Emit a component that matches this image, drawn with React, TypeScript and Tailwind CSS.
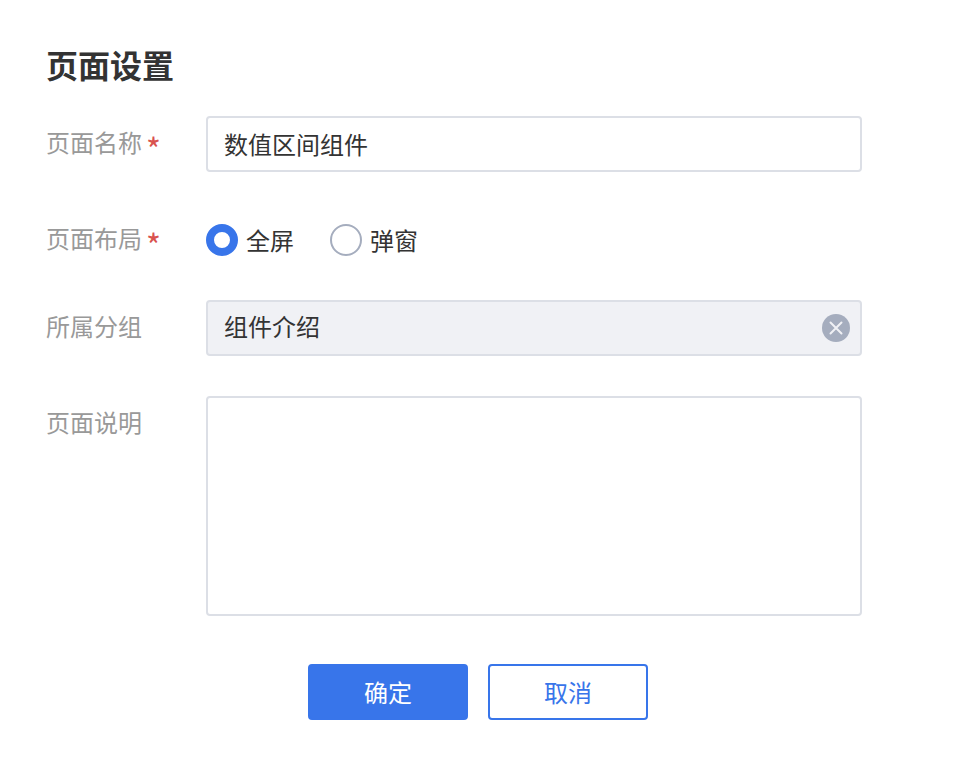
import { useState, type ReactNode } from "react";

interface FormRowProps {
    label: string;
    htmlFor?: string;
    required?: boolean;
    children: ReactNode;
}

function FormRow({ label, htmlFor, required, children }: FormRowProps) {
    return (
        <div className="flex items-start">
            <label htmlFor={htmlFor} className="flex h-14 w-40 shrink-0 items-center gap-1 pb-1 text-[#999999]">
                {label}
                {required && <span className="pt-3 text-[32px] leading-8 text-[#d9534f]">*</span>}
            </label>
            <div className="min-w-0 flex-1">{children}</div>
        </div>
    );
}

const layouts = [
    { value: "full", label: "全屏" },
    { value: "modal", label: "弹窗" },
];

export default function App() {
    const [name, setName] = useState("数值区间组件");
    const [layout, setLayout] = useState("full");
    const [group, setGroup] = useState("组件介绍");
    const [description, setDescription] = useState("");

    return (
        <form
            className="min-h-screen bg-white pt-10 pb-12 font-['Noto_Sans_CJK_SC',sans-serif] text-2xl text-[#333333]"
            onSubmit={(e) => e.preventDefault()}
        >
            <div className="pr-[94px] pl-[46px]">
                <h1 className="mb-7 text-[32px] leading-12 font-bold">页面设置</h1>

                <FormRow label="页面名称" htmlFor="page-name" required>
                    <input
                        id="page-name"
                        type="text"
                        value={name}
                        onChange={(e) => setName(e.target.value)}
                        className="block h-14 w-full rounded border-2 border-[#dcdfe6] px-4 pb-0.5 outline-none"
                    />
                </FormRow>

                <div className="mt-10">
                    <FormRow label="页面布局" required>
                        <div className="flex h-14 items-center gap-9" role="radiogroup" aria-label="页面布局">
                            {layouts.map((item) => (
                                <label key={item.value} className="flex items-center gap-2">
                                    <input
                                        type="radio"
                                        name="layout"
                                        value={item.value}
                                        checked={layout === item.value}
                                        onChange={() => setLayout(item.value)}
                                        className="size-8 appearance-none rounded-full border-2 border-[#a5adbe] bg-white checked:border-8 checked:border-[#3875ea]"
                                    />
                                    <span>{item.label}</span>
                                </label>
                            ))}
                        </div>
                    </FormRow>
                </div>

                <div className="mt-8">
                    <FormRow label="所属分组" htmlFor="page-group">
                        <div className="relative">
                            <input
                                id="page-group"
                                type="text"
                                readOnly
                                value={group}
                                className="block h-14 w-full rounded border-2 border-[#dcdfe6] bg-[#f0f1f5] pr-14 pb-1.5 pl-4 outline-none"
                            />
                            {group && (
                                <button
                                    type="button"
                                    aria-label="清除"
                                    onClick={() => setGroup("")}
                                    className="absolute top-3.5 right-3 size-7 rounded-full bg-[#a5adbe] text-[#f0f1f5]"
                                >
                                    <svg viewBox="0 0 28 28" fill="none" stroke="currentColor" strokeWidth="2" strokeLinecap="round">
                                        <path d="M8.5 8.5l11 11M19.5 8.5l-11 11" />
                                    </svg>
                                </button>
                            )}
                        </div>
                    </FormRow>
                </div>

                <div className="mt-10">
                    <FormRow label="页面说明" htmlFor="page-description">
                        <textarea
                            id="page-description"
                            value={description}
                            onChange={(e) => setDescription(e.target.value)}
                            className="block h-55 w-full resize-none rounded border-2 border-[#dcdfe6] px-4 py-2 outline-none"
                        />
                    </FormRow>
                </div>
            </div>

            <div className="mt-12 flex justify-center gap-5">
                <button type="submit" className="h-14 w-40 rounded border-2 border-[#3875ea] bg-[#3875ea] text-white">
                    确定
                </button>
                <button type="button" className="h-14 w-40 rounded border-2 border-[#3875ea] bg-white text-[#3875ea]">
                    取消
                </button>
            </div>
        </form>
    );
}
